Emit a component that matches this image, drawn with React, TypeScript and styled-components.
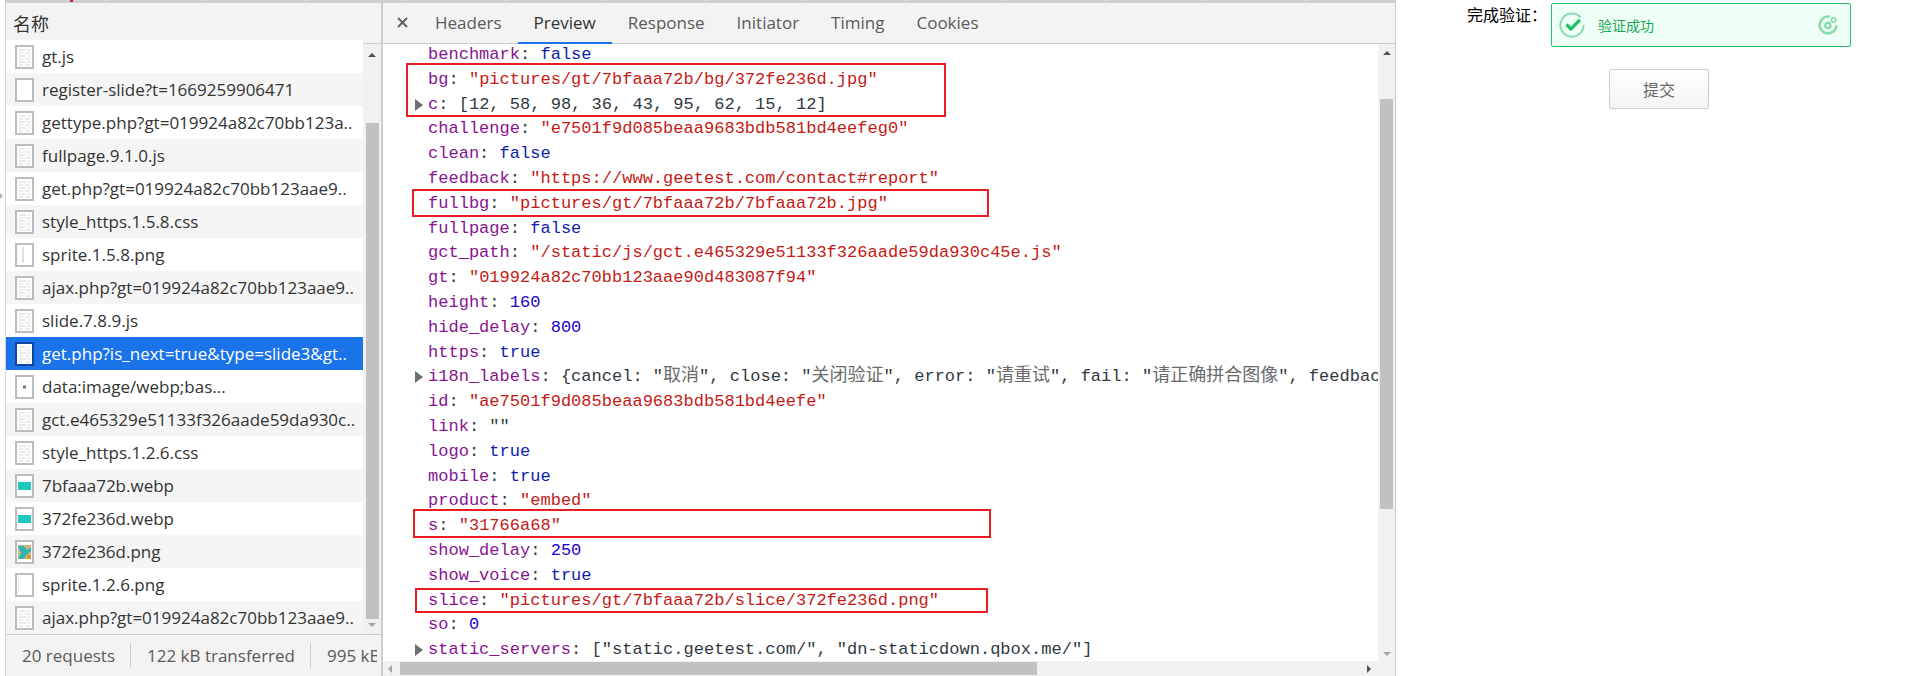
import React from 'react'
import styled, { createGlobalStyle } from 'styled-components'

const uiFont = `"Open Sans", "Noto Sans CJK SC", sans-serif`
const monoFont = `"Liberation Mono", "Noto Sans CJK SC", monospace`

const GlobalStyle = createGlobalStyle`
  html, body { margin: 0; padding: 0; background: #fff; overflow: hidden; }
  * { box-sizing: border-box; }
`

type IconKind = 'doc' | 'blank' | 'sprite' | 'dot' | 'teal' | 'slice' | 'sheet'

const requests: { name: string; icon: IconKind }[] = [
  { name: 'gt.js', icon: 'doc' },
  { name: 'register-slide?t=1669259906471', icon: 'blank' },
  { name: 'gettype.php?gt=019924a82c70bb123a..', icon: 'doc' },
  { name: 'fullpage.9.1.0.js', icon: 'doc' },
  { name: 'get.php?gt=019924a82c70bb123aae9..', icon: 'doc' },
  { name: 'style_https.1.5.8.css', icon: 'doc' },
  { name: 'sprite.1.5.8.png', icon: 'sprite' },
  { name: 'ajax.php?gt=019924a82c70bb123aae9..', icon: 'doc' },
  { name: 'slide.7.8.9.js', icon: 'doc' },
  { name: 'get.php?is_next=true&type=slide3&gt..', icon: 'doc' },
  { name: 'data:image/webp;bas...', icon: 'dot' },
  { name: 'gct.e465329e51133f326aade59da930c..', icon: 'doc' },
  { name: 'style_https.1.2.6.css', icon: 'doc' },
  { name: '7bfaaa72b.webp', icon: 'teal' },
  { name: '372fe236d.webp', icon: 'teal' },
  { name: '372fe236d.png', icon: 'slice' },
  { name: 'sprite.1.2.6.png', icon: 'sheet' },
  { name: 'ajax.php?gt=019924a82c70bb123aae9..', icon: 'doc' },
]

type ValueKind = 'str' | 'num' | 'bool' | 'plain'
type Line = { key: string; value: React.ReactNode; kind: ValueKind; arrow?: boolean }

const Han = styled.span`
  font-family: "Noto Sans CJK SC", sans-serif;
  font-size: 18px;
  line-height: 0;
  color: #6b6b6b;
`

const lines: Line[] = [
  { key: 'benchmark', value: 'false', kind: 'bool' },
  { key: 'bg', value: '"pictures/gt/7bfaaa72b/bg/372fe236d.jpg"', kind: 'str' },
  { key: 'c', value: '[12, 58, 98, 36, 43, 95, 62, 15, 12]', kind: 'plain', arrow: true },
  { key: 'challenge', value: '"e7501f9d085beaa9683bdb581bd4eefeg0"', kind: 'str' },
  { key: 'clean', value: 'false', kind: 'bool' },
  { key: 'feedback', value: '"https://www.geetest.com/contact#report"', kind: 'str' },
  { key: 'fullbg', value: '"pictures/gt/7bfaaa72b/7bfaaa72b.jpg"', kind: 'str' },
  { key: 'fullpage', value: 'false', kind: 'bool' },
  { key: 'gct_path', value: '"/static/js/gct.e465329e51133f326aade59da930c45e.js"', kind: 'str' },
  { key: 'gt', value: '"019924a82c70bb123aae90d483087f94"', kind: 'str' },
  { key: 'height', value: '160', kind: 'num' },
  { key: 'hide_delay', value: '800', kind: 'num' },
  { key: 'https', value: 'true', kind: 'bool' },
  {
    key: 'i18n_labels',
    kind: 'plain',
    arrow: true,
    value: (
      <>
        {'{cancel: "'}<Han>取消</Han>{'", close: "'}<Han>关闭验证</Han>{'", error: "'}<Han>请重试</Han>
        {'", fail: "'}<Han>请正确拼合图像</Han>{'", feedback: "'}<Han>反馈</Han>{'"}'}
      </>
    ),
  },
  { key: 'id', value: '"ae7501f9d085beaa9683bdb581bd4eefe"', kind: 'str' },
  { key: 'link', value: '""', kind: 'plain' },
  { key: 'logo', value: 'true', kind: 'bool' },
  { key: 'mobile', value: 'true', kind: 'bool' },
  { key: 'product', value: '"embed"', kind: 'str' },
  { key: 's', value: '"31766a68"', kind: 'str' },
  { key: 'show_delay', value: '250', kind: 'num' },
  { key: 'show_voice', value: 'true', kind: 'bool' },
  { key: 'slice', value: '"pictures/gt/7bfaaa72b/slice/372fe236d.png"', kind: 'str' },
  { key: 'so', value: '0', kind: 'num' },
  { key: 'static_servers', value: '["static.geetest.com/", "dn-staticdown.qbox.me/"]', kind: 'plain', arrow: true },
]

const tabs = ['Headers', 'Preview', 'Response', 'Initiator', 'Timing', 'Cookies']

const valueColors: Record<ValueKind, string> = {
  str: '#c41a16',
  num: '#1c00cf',
  bool: '#0d22aa',
  plain: '#303942',
}

const Page = styled.div`
  width: 1920px;
  height: 676px;
  overflow: hidden;
  display: flex;
  flex-direction: column;
  background: #fff;
`

const TopStrip = styled.div`
  width: 1391px;
  height: 3px;
  flex: none;
  margin-left: 5px;
  background:
    linear-gradient(#c8234f, #c8234f) 65px 0 / 3px 2px no-repeat,
    repeating-linear-gradient(90deg, #cfcfcf 0, #cfcfcf 99px, #eee 99px, #eee 100px) 0 0 / 100% 1px no-repeat,
    #cfcfcf;
`

const Body = styled.div`
  flex: 1;
  min-height: 0;
  display: flex;
`

const Gutter = styled.div`
  width: 6px;
  flex: none;
  position: relative;
  border-right: 1px solid #d4d4d4;
  &::after {
    content: '';
    position: absolute;
    left: 0;
    top: 190px;
    border-left: 3px solid #b0b0b0;
    border-top: 3px solid transparent;
    border-bottom: 3px solid transparent;
  }
`

const NamePane = styled.div`
  width: 375px;
  flex: none;
  display: flex;
  flex-direction: column;
  font-family: ${uiFont};
`

const NameHeader = styled.div`
  height: 41px;
  flex: none;
  padding-left: 7px;
  display: flex;
  align-items: center;
  font-size: 18px;
  color: #333;
  background: #f3f3f3;
  border-bottom: 1px solid #cdcdcd;
`

const NameBody = styled.div`
  flex: 1;
  min-height: 0;
  display: flex;
`

const RowList = styled.div`
  width: 357px;
  flex: none;
  overflow: hidden;
  margin-top: -4px;
`

const RowItem = styled.div<{ $striped: boolean; $selected: boolean }>`
  height: 33px;
  display: flex;
  align-items: center;
  gap: 8px;
  padding-left: 9px;
  font-size: 17px;
  white-space: nowrap;
  overflow: hidden;
  color: ${p => (p.$selected ? '#fff' : '#333')};
  background: ${p => (p.$selected ? '#1a73e8' : p.$striped ? '#f5f5f5' : '#fff')};
`

const VTrack = styled.div`
  width: 18px;
  flex: none;
  display: flex;
  flex-direction: column;
  align-items: center;
  background: #f1f1f1;
`

const ArrowUp = styled.div<{ $top: number }>`
  width: 0;
  height: 0;
  flex: none;
  margin-top: ${p => p.$top}px;
  border-left: 4px solid transparent;
  border-right: 4px solid transparent;
  border-bottom: 4px solid #505050;
`

const ArrowDown = styled.div`
  width: 0;
  height: 0;
  flex: none;
  border-left: 4px solid transparent;
  border-right: 4px solid transparent;
  border-top: 4px solid #a3a3a3;
`

const NameThumb = styled.div`
  width: 13px;
  height: 496px;
  flex: none;
  margin: 66px 0 4px;
  background: #c1c1c1;
`

const Footer = styled.div`
  height: 42px;
  flex: none;
  padding: 0 4px 0 16px;
  background: #f3f3f3;
  border-top: 1px solid #cdcdcd;
  font-size: 17px;
  color: #5a5a5a;
`

const FooterItems = styled.div`
  height: 100%;
  display: flex;
  align-items: center;
  overflow: hidden;
  white-space: nowrap;
`

const FooterItem = styled.div`
  height: 25px;
  display: flex;
  align-items: center;
  padding-right: 15px;
  margin-right: 16px;
  border-right: 1px solid #cdcdcd;
  &:last-child { border-right: 0; }
`

const Divider = styled.div`
  width: 2px;
  flex: none;
  background: #cdcdcd;
`

const PreviewPane = styled.div`
  width: 1013px;
  flex: none;
  display: flex;
  flex-direction: column;
  border-right: 1px solid #cdcdcd;
  position: relative;
`

const TabBar = styled.div`
  height: 41px;
  flex: none;
  display: flex;
  align-items: stretch;
  background: #f3f3f3;
  border-bottom: 1px solid #cdcdcd;
  font-family: ${uiFont};
  font-size: 17px;
`

const CloseButton = styled.div`
  width: 36px;
  flex: none;
  display: flex;
  align-items: center;
  justify-content: center;
  padding: 0 0 2px 3px;
`

const Tab = styled.div<{ $active: boolean }>`
  display: flex;
  align-items: center;
  padding: 0 16px;
  color: ${p => (p.$active ? '#333' : '#5a5a5a')};
  border-bottom: 2px solid ${p => (p.$active ? '#1a73e8' : 'transparent')};
  margin-bottom: -1px;
`

const PreviewBody = styled.div`
  flex: 1;
  min-height: 0;
  display: flex;
`

const CodeArea = styled.div`
  flex: 1;
  min-width: 0;
  overflow: hidden;
  margin-top: -1px;
  font-family: ${monoFont};
  font-size: 17.05px;
  line-height: 24.8px;
  color: #303942;
`

const CodeLine = styled.div`
  position: relative;
  height: 24.8px;
  padding-left: 45px;
  white-space: pre;
`

const Caret = styled.span`
  position: absolute;
  left: 32px;
  top: 6px;
  border-left: 8px solid #6e6e6e;
  border-top: 6px solid transparent;
  border-bottom: 6px solid transparent;
`

const Key = styled.span`
  color: #881391;
`

const Value = styled.span<{ $kind: ValueKind }>`
  color: ${p => valueColors[p.$kind]};
`

const CodeTrack = styled.div`
  width: 17px;
  flex: none;
  display: flex;
  flex-direction: column;
  align-items: center;
  background: #f1f1f1;
`

const CodeThumb = styled.div`
  width: 13px;
  height: 410px;
  flex: none;
  margin: 44px 0 143px;
  background: #c1c1c1;
`

const HTrack = styled.div`
  height: 15px;
  flex: none;
  display: flex;
  align-items: center;
  background: #f1f1f1;
`

const ArrowLeft = styled.div`
  width: 0;
  height: 0;
  flex: none;
  margin-left: 5px;
  border-top: 4px solid transparent;
  border-bottom: 4px solid transparent;
  border-right: 4px solid #a3a3a3;
`

const ArrowRight = styled.div`
  width: 0;
  height: 0;
  flex: none;
  margin-left: 330px;
  border-top: 4px solid transparent;
  border-bottom: 4px solid transparent;
  border-left: 4px solid #505050;
`

const HThumb = styled.div`
  width: 637px;
  height: 13px;
  flex: none;
  margin-left: 8px;
  background: #c1c1c1;
`

const Callout = styled.div<{ $left: number; $top: number; $width: number; $height: number }>`
  position: absolute;
  left: ${p => p.$left}px;
  top: ${p => p.$top}px;
  width: ${p => p.$width}px;
  height: ${p => p.$height}px;
  border: 2px solid #ed1c24;
  pointer-events: none;
`

const FormPane = styled.div`
  flex: 1;
  padding-left: 71px;
  font-family: "Noto Sans CJK SC", sans-serif;
`

const FormRow = styled.div`
  display: flex;
  align-items: flex-start;
`

const FormLabel = styled.div`
  width: 84px;
  flex: none;
  margin-top: -1px;
  font-size: 16px;
  line-height: 24px;
  white-space: nowrap;
  color: #000;
`

const SuccessBox = styled.div`
  width: 300px;
  height: 44px;
  display: flex;
  align-items: center;
  padding: 0 12px 0 7px;
  background: #eefff5;
  border: 1px solid #26c267;
  border-radius: 2px;
  font-size: 14px;
  color: #18a452;
`

const SuccessText = styled.span`
  flex: 1;
  margin-left: 13px;
`

const SubmitButton = styled.button`
  display: block;
  width: 100px;
  height: 40px;
  margin: 22px 0 0 142px;
  padding: 0;
  font-family: "Noto Sans CJK SC", sans-serif;
  font-size: 16px;
  color: #666;
  background: linear-gradient(#fff, #f3f3f3);
  border: 1px solid #ccc;
  border-radius: 2px;
`

const docLines = [5, 8, 11, 14, 17, 20]

const FileIcon = ({ kind, selected }: { kind: IconKind; selected: boolean }) => (
  <svg width="19" height="24" viewBox="0 0 19 24" style={{ flex: 'none' }}>
    <rect x="1" y="1" width="17" height="22" fill="#fff" stroke={selected ? '#0d47a1' : '#bcbcbc'} strokeWidth="2" />
    {kind === 'doc' && (
      <g stroke="#e2e2e2" strokeWidth="1.4">
        {docLines.map((y, i) => (
          <React.Fragment key={y}>
            <line x1="4" x2={i % 2 ? 8 : 11} y1={y} y2={y} />
            <line x1={i % 2 ? 10 : 12.5} x2="15" y1={y} y2={y} />
          </React.Fragment>
        ))}
      </g>
    )}
    {kind === 'sprite' && <line x1="8" x2="8" y1="4" y2="20" stroke="#d4b8a8" strokeWidth="1" />}
    {kind === 'dot' && <rect x="8" y="10.5" width="3" height="3" fill="#777" />}
    {kind === 'teal' && <rect x="3" y="8" width="13" height="8" fill="#1cc7bb" />}
    {kind === 'sheet' && <line x1="3.5" x2="3.5" y1="4" y2="20" stroke="#e8e8e8" strokeWidth="1.2" />}
    {kind === 'slice' && (
      <g>
        <rect x="3" y="5" width="13" height="14" fill="#cdbb7a" />
        <path d="M3 6h6l3 4 4-3v4l-4 3-3 5H3l3-6z" fill="#2fb3b3" />
        <path d="M12 14l4 1v4h-5z" fill="#d9963f" />
      </g>
    )}
  </svg>
)

const SuccessIcon = () => (
  <svg width="26" height="26" viewBox="0 0 26 26" style={{ flex: 'none' }}>
    <path d="M21.5 5.2A11.6 11.6 0 1 0 24.6 13" fill="none" stroke="#8bdcae" strokeWidth="2" />
    <path d="M7.5 12.5l4.4 4.4 9-9" fill="none" stroke="#1bc265" strokeWidth="3.2" />
  </svg>
)

const GeetestLogo = () => (
  <svg width="20" height="20" viewBox="0 0 20 20" style={{ flex: 'none' }}>
    <path d="M11.5 1.7A8.4 8.4 0 1 0 18.4 10.2" fill="none" stroke="#86dcac" strokeWidth="2.6" />
    <circle cx="9.8" cy="10.4" r="2.7" fill="none" stroke="#86dcac" strokeWidth="2.2" />
    <circle cx="15.6" cy="5" r="2.2" fill="none" stroke="#86dcac" strokeWidth="1.6" />
  </svg>
)

const CloseIcon = () => (
  <svg width="11" height="11" viewBox="0 0 11 11">
    <path d="M1 1l9 9M10 1l-9 9" stroke="#5f6368" strokeWidth="2" />
  </svg>
)

export default function App() {
  return (
    <Page>
      <GlobalStyle />
      <TopStrip />
      <Body>
        <Gutter />
        <NamePane>
          <NameHeader>名称</NameHeader>
          <NameBody>
            <RowList>
              {requests.map((r, i) => (
                <RowItem key={i} $striped={i % 2 === 1} $selected={i === 9}>
                  <FileIcon kind={r.icon} selected={i === 9} />
                  {r.name}
                </RowItem>
              ))}
            </RowList>
            <VTrack>
              <ArrowUp $top={9} />
              <NameThumb />
              <ArrowDown />
            </VTrack>
          </NameBody>
          <Footer>
            <FooterItems>
              <FooterItem>20 requests</FooterItem>
              <FooterItem>122 kB transferred</FooterItem>
              <FooterItem>995 kB resources</FooterItem>
            </FooterItems>
          </Footer>
        </NamePane>
        <Divider />
        <PreviewPane>
          <TabBar>
            <CloseButton><CloseIcon /></CloseButton>
            {tabs.map(t => (
              <Tab key={t} $active={t === 'Preview'}>{t}</Tab>
            ))}
          </TabBar>
          <PreviewBody>
            <CodeArea>
              {lines.map(l => (
                <CodeLine key={l.key}>
                  {l.arrow && <Caret />}
                  <Key>{l.key}</Key>: <Value $kind={l.kind}>{l.value}</Value>
                </CodeLine>
              ))}
            </CodeArea>
            <CodeTrack>
              <ArrowUp $top={7} />
              <CodeThumb />
              <ArrowDown />
            </CodeTrack>
          </PreviewBody>
          <HTrack>
            <ArrowLeft />
            <HThumb />
            <ArrowRight />
          </HTrack>
          <Callout $left={23} $top={60} $width={540} $height={54} />
          <Callout $left={29} $top={186} $width={577} $height={28} />
          <Callout $left={30} $top={506} $width={578} $height={29} />
          <Callout $left={32} $top={585} $width={573} $height={25} />
        </PreviewPane>
        <FormPane>
          <FormRow>
            <FormLabel>完成验证：</FormLabel>
            <SuccessBox>
              <SuccessIcon />
              <SuccessText>验证成功</SuccessText>
              <GeetestLogo />
            </SuccessBox>
          </FormRow>
          <SubmitButton>提交</SubmitButton>
        </FormPane>
      </Body>
    </Page>
  )
}
